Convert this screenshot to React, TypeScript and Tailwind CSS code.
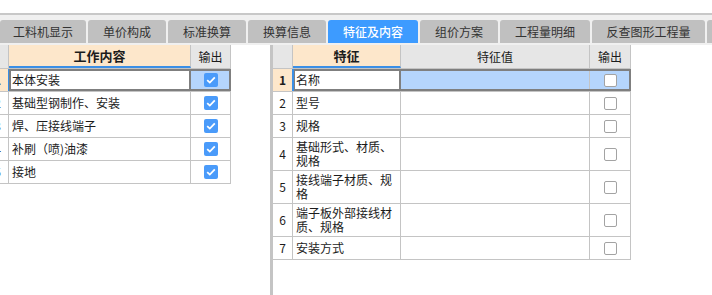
import React from "react";

const TABS = [
  { label: "工料机显示", w: "w-[86px]" },
  { label: "单价构成", w: "w-[78px]" },
  { label: "标准换算", w: "w-[78px]" },
  { label: "换算信息", w: "w-[78px]" },
  { label: "特征及内容", w: "w-[90px]", active: true },
  { label: "组价方案", w: "w-[78px]" },
  { label: "工程量明细", w: "w-[90px]" },
  { label: "反查图形工程量", w: "w-[113px]" },
  { label: "", w: "w-[40px]" },
];

const WORK = ["本体安装", "基础型钢制作、安装", "焊、压接线端子", "补刷（喷)油漆", "接地"];

const FEATURES: { lines: string[]; tall?: boolean }[] = [
  { lines: ["名称"] },
  { lines: ["型号"] },
  { lines: ["规格"] },
  { lines: ["基础形式、材质、", "规格"], tall: true },
  { lines: ["接线端子材质、规", "格"], tall: true },
  { lines: ["端子板外部接线材", "质、规格"], tall: true },
  { lines: ["安装方式"] },
];

function Checked() {
  return (
    <span className="flex h-[14px] w-[14px] items-center justify-center rounded-[2px] bg-[#4a9bfa]">
      <svg width="10" height="8" viewBox="0 0 10 8">
        <path d="M1.2 4.2 L3.8 6.6 L8.8 1.4" fill="none" stroke="#fff" strokeWidth="1.8" />
      </svg>
    </span>
  );
}

function Unchecked() {
  return <span className="block h-[13px] w-[13px] rounded-[2px] border border-[#a3a3a3] bg-white" />;
}

function WorkTable() {
  // row-number column is scrolled mostly out of view
  return (
    <div className="ml-[-13px] w-[244px] text-[12px] text-[#1c1c1c]">
      <div className="flex h-[24px] border-b border-[#c4c4c4]">
        <div className="w-[22px] border-r border-[#c4c4c4] bg-[#e6e6e6]" />
        <div className="flex w-[182px] items-center justify-center border-r border-b-2 border-r-[#c4c4c4] border-b-[#3b8fe6] bg-[#fde7cb] text-[13px] font-bold">
          工作内容
        </div>
        <div className="flex w-[40px] items-center justify-center border-r border-[#c4c4c4] bg-[#e6e6e6]">输出</div>
      </div>
      {WORK.map((t, i) => {
        const sel = i === 0;
        return (
          <div key={t} className="relative flex h-[23px] border-b border-[#c4c4c4]">
            <div
              className={`flex w-[22px] items-center justify-center border-r border-[#c4c4c4] ${sel ? "bg-[#fde7cb] font-bold" : "bg-white"}`}
            >
              {i + 1}
            </div>
            <div className="flex w-[182px] items-center border-r border-[#c4c4c4] bg-white pl-[3px]">{t}</div>
            <div
              className={`flex w-[40px] items-center justify-center border-r border-[#c4c4c4] ${sel ? "bg-[#b5d5fc]" : "bg-white"}`}
            >
              <Checked />
            </div>
            {sel && (
              <>
                <div className="absolute inset-y-0 left-[22px] right-0 border-2 border-[#7f7f7f]" />
                <div className="absolute inset-y-0 left-[22px] w-[182px] border-2 border-[#7f7f7f]" />
                <div className="absolute inset-y-0 left-[21px] w-[1px] bg-[#3b8fe6]" />
              </>
            )}
          </div>
        );
      })}
    </div>
  );
}

function FeatureTable() {
  return (
    <div className="w-[358px] text-[12px] text-[#1c1c1c]">
      <div className="flex h-[24px] border-b border-[#c4c4c4]">
        <div className="w-[20px] border-r border-[#c4c4c4] bg-[#e6e6e6]" />
        <div className="flex w-[108px] items-center justify-center border-r border-b-2 border-r-[#c4c4c4] border-b-[#3b8fe6] bg-[#fde7cb] text-[13px] font-bold">
          特征
        </div>
        <div className="flex w-[189px] items-center justify-center border-r border-[#c4c4c4] bg-[#e6e6e6]">特征值</div>
        <div className="flex w-[41px] items-center justify-center border-r border-[#c4c4c4] bg-[#e6e6e6]">输出</div>
      </div>
      {FEATURES.map((f, i) => {
        const sel = i === 0;
        return (
          <div
            key={i}
            className={`relative flex border-b border-[#c4c4c4] ${f.tall ? "h-[33px]" : "h-[23px]"}`}
          >
            <div
              className={`flex w-[20px] items-center justify-center border-r border-[#c4c4c4] ${sel ? "bg-[#fde7cb] font-bold" : "bg-white"}`}
            >
              {i + 1}
            </div>
            <div className="flex w-[108px] flex-col justify-center border-r border-[#c4c4c4] bg-white pl-[3px] leading-[14px]">
              {f.lines.map((l) => (
                <span key={l}>{l}</span>
              ))}
            </div>
            <div className={`w-[189px] border-r border-[#c4c4c4] ${sel ? "bg-[#b5d5fc]" : "bg-white"}`} />
            <div
              className={`flex w-[41px] items-center justify-center border-r border-[#c4c4c4] ${sel ? "bg-[#b5d5fc]" : "bg-white"}`}
            >
              <Unchecked />
            </div>
            {sel && (
              <>
                <div className="absolute inset-y-0 left-[20px] right-0 border-2 border-[#7f7f7f]" />
                <div className="absolute inset-y-0 left-[20px] w-[108px] border-2 border-[#7f7f7f]" />
                <div className="absolute inset-y-0 left-[19px] w-[2px] bg-[#3b8fe6]" />
              </>
            )}
          </div>
        );
      })}
    </div>
  );
}

export default function App() {
  return (
    <div className="flex h-[295px] w-[712px] flex-col overflow-hidden bg-white font-['Noto_Sans_CJK_SC','Microsoft_YaHei',sans-serif]">
      <div className="h-[13px] bg-white" />
      <div className="flex gap-[2px] overflow-hidden border-t-2 border-[#c8c8c8] bg-[#f0f0f0] pt-[5px]">
        {TABS.map((t, i) => (
          <div
            key={i}
            className={`flex h-[23px] shrink-0 items-center justify-center rounded-t-[3px] text-[12px] ${t.w} ${
              t.active ? "bg-[#3d9bff] font-medium text-white" : "bg-[#c0c0c0] text-[#333]"
            }`}
          >
            {t.label}
          </div>
        ))}
      </div>
      <div className="h-[2px] bg-[#f0f0f0]" />
      <div className="flex flex-1">
        <div className="w-[270px] overflow-hidden bg-white">
          <WorkTable />
        </div>
        <div className="w-[3px] bg-[#c4c4c4]" />
        <div className="flex-1 bg-white">
          <FeatureTable />
        </div>
      </div>
    </div>
  );
}
